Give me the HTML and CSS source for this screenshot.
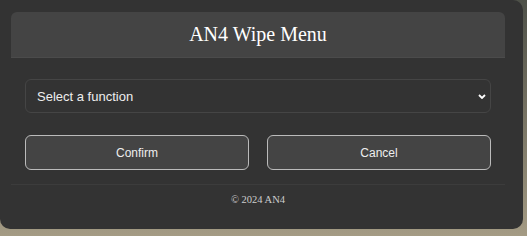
FILE: index.html
```html
<!DOCTYPE html>
<html lang="en">
<head>
  <meta charset="UTF-8">
  <meta name="viewport" content="width=device-width, initial-scale=1.0">
  <title>AN4 Wipe Menu</title>
  <link rel="stylesheet" href="styles.css">
</head>
<body>
  <div class="menu">
    <div class="menu-header">AN4 Wipe Menu</div>
    <div class="menu-body">
      <div class="select-wrap">
        <select id="wipeFunction" class="function-select">
          <option value="">Select a function</option>
          <option value="vehicles">Wipe vehicles</option>
          <option value="objects">Wipe objects</option>
          <option value="peds">Wipe peds</option>
        </select>
        <svg class="select-arrow" width="8" height="5" viewBox="0 0 8 5">
          <path d="M1 1 L4 4 L7 1" fill="none" stroke="#fff" stroke-width="1.8"/>
        </svg>
      </div>
      <div class="actions">
        <button id="confirmBtn">Confirm</button>
        <button id="cancelBtn">Cancel</button>
      </div>
    </div>
    <div class="menu-footer">&copy; 2024 AN4</div>
  </div>
</body>
</html>
```

FILE: styles.css
```css
html, body {
  height: 100%;
}
body {
  margin: 0;
  font-family: "Liberation Serif", "Times New Roman", serif;
  background: linear-gradient(180deg, #4d5048 0%, #6f6c5e 40%, #8c8673 75%, #a49b84 100%);
}
.menu {
  width: 523px;
  height: 229px;
  box-sizing: border-box;
  padding: 12px 18px 0 11px;
  background-color: #333;
  border-radius: 0 10px 10px 10px;
}
.menu-header {
  height: 45px;
  background-color: #444;
  border-radius: 6px 6px 0 0;
  border-bottom: 1px solid #4b4b4b;
  color: #fff;
  font-size: 20px;
  display: flex;
  align-items: center;
  justify-content: center;
}
.menu-body {
  padding: 21px 14px 14px;
  border-bottom: 1px solid #3c3c3c;
}
.select-wrap {
  position: relative;
}
.function-select {
  display: block;
  width: 100%;
  height: 34px;
  padding: 0 11px;
  appearance: none;
  -webkit-appearance: none;
  background-color: #333;
  color: #eee;
  border: 1px solid #454545;
  border-radius: 6px;
  font-family: "Liberation Sans", Arial, sans-serif;
  font-size: 13px;
}
.select-arrow {
  position: absolute;
  right: 5px;
  top: 15px;
  pointer-events: none;
}
.actions {
  display: flex;
  gap: 18px;
  margin-top: 22px;
}
.actions button {
  flex: 1;
  height: 35px;
  background-color: #444;
  color: #eee;
  border: 1px solid #bbb;
  border-radius: 6px;
  font-family: "Liberation Sans", Arial, sans-serif;
  font-size: 12px;
  cursor: pointer;
}
.actions button:hover {
  background-color: #4d4d4d;
}
.menu-footer {
  padding-top: 9px;
  text-align: center;
  color: #ccc;
  font-size: 10.5px;
}
```
